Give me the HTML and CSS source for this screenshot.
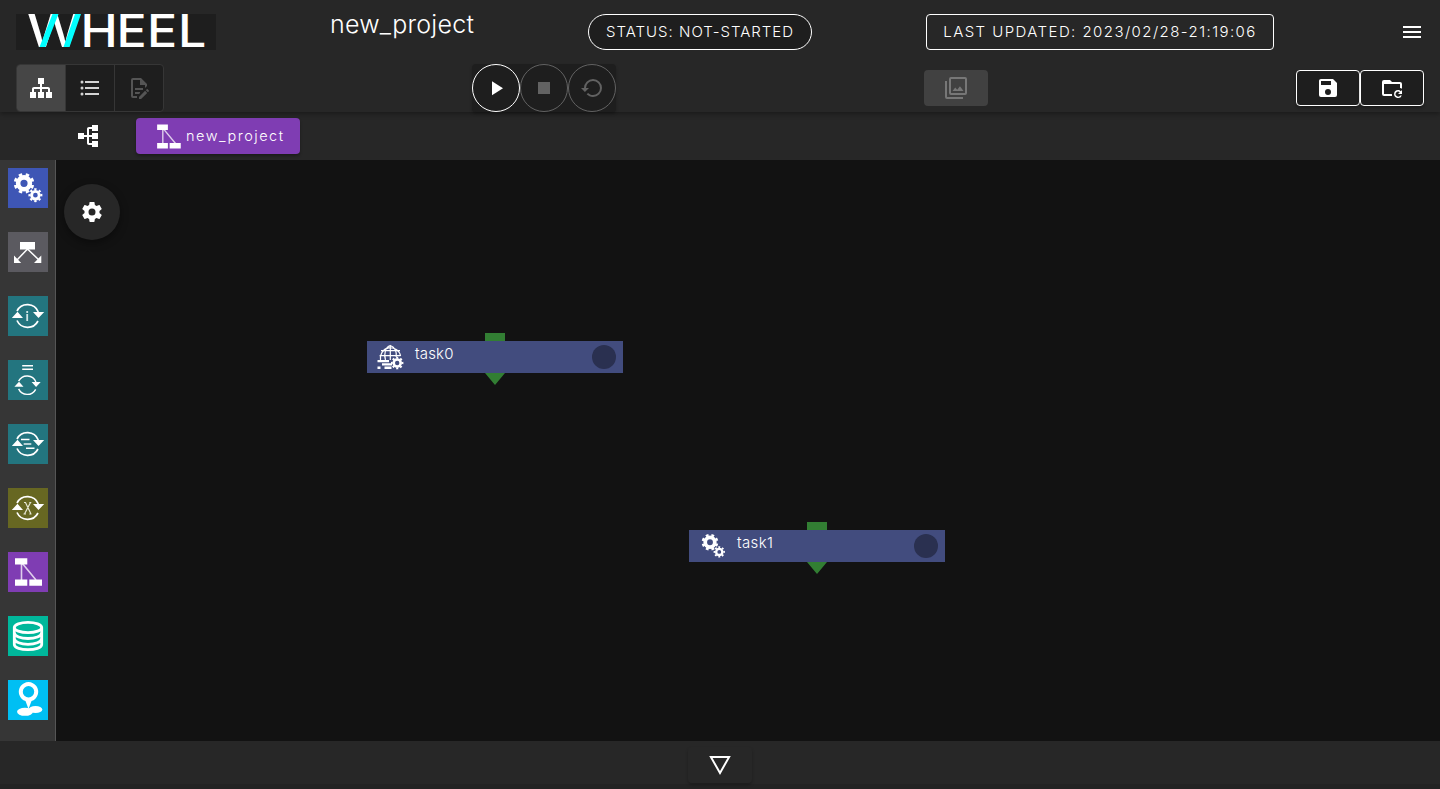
FILE: index.html
```html
<!DOCTYPE html>
<html lang="en">
<head>
<meta charset="utf-8">
<title>WHEEL workflow</title>
<link rel="stylesheet" href="styles.css">
</head>
<body>
<svg class="defs" width="0" height="0">
  <defs>
    <symbol id="gears" viewBox="0 0 40 40">
      <g fill="none" stroke="#fff">
        <circle cx="16" cy="15.3" r="5.9" stroke-width="4.6"/>
        <circle cx="16" cy="15.3" r="8.7" stroke-width="3.2" pathLength="16" stroke-dasharray="1 1" transform="rotate(11 16 15.3)"/>
        <circle cx="27.4" cy="27.2" r="3.8" stroke-width="2.9"/>
        <circle cx="27.4" cy="27.2" r="5.9" stroke-width="2.2" pathLength="16" stroke-dasharray="1 1" transform="rotate(-11 27.4 27.2)"/>
      </g>
    </symbol>
    <symbol id="cycle" viewBox="0 0 40 40">
      <path d="M9 15A11.7 11.7 0 0 1 30.3 16M30 25A11.7 11.7 0 0 1 9 24.5" fill="none" stroke="#fff" stroke-width="1.7"/>
      <path d="M3.8 21.9L9.5 15.8L15 21.9ZM25 16.1H36.2L30.5 22Z" fill="#fff"/>
    </symbol>
    <symbol id="flow" viewBox="0 0 40 40">
      <path d="M13.5 11V28M14 11L28 28" fill="none" stroke="#fff" stroke-opacity=".75" stroke-width="1.6"/>
      <path d="M7 6.3H19.3V12.5H7ZM7 27.5H19.3V33.7H7ZM21.3 27.5H34V33.7H21.3Z" fill="#fff"/>
    </symbol>
    <symbol id="sitemap" viewBox="0 0 24 24">
      <path fill="#fff" d="M9,2V8H11V11H5C3.89,11 3,11.89 3,13V16H1V22H7V16H5V13H11V16H9V22H15V16H13V13H19V16H17V22H23V16H21V13C21,11.89 20.11,11 19,11H13V8H15V2H9Z"/>
    </symbol>
  </defs>
</svg>
<div class="app">
  <header class="header">
    <div class="row-top">
      <svg class="logo" viewBox="0 0 200 36">
        <text x="11" y="33" textLength="54" lengthAdjust="spacingAndGlyphs" class="logo-text">W</text>
        <path d="M23.5 33H29.5L42.5 0H36.5ZM47.5 33H53.5L65 0H59Z" fill="#0ff"/>
        <text x="64.5 100.5 131 162" y="33" textLength="126" lengthAdjust="spacingAndGlyphs" class="logo-text">HEEL</text>
      </svg>
      <div class="title">new_project</div>
      <div class="chip status"><span>STATUS: NOT-STARTED</span></div>
      <div class="chip updated"><span>LAST UPDATED: 2023/02/28-21:19:06</span></div>
      <button class="menu"><svg class="icon" viewBox="0 0 24 24"><path d="M3,6H21V8H3V6M3,11H21V13H3V11M3,16H21V18H3V16Z"/></svg></button>
    </div>
    <div class="row-tools">
      <div class="views">
        <button class="view active"><svg class="icon"><use href="#sitemap"/></svg></button>
        <button class="view"><svg class="icon soft" viewBox="0 0 24 24"><path d="M7,5H21V7H7V5M7,13V11H21V13H7M4,4.5A1.5,1.5 0 0,1 5.5,6A1.5,1.5 0 0,1 4,7.5A1.5,1.5 0 0,1 2.5,6A1.5,1.5 0 0,1 4,4.5M4,10.5A1.5,1.5 0 0,1 5.5,12A1.5,1.5 0 0,1 4,13.5A1.5,1.5 0 0,1 2.5,12A1.5,1.5 0 0,1 4,10.5M7,19V17H21V19H7M4,16.5A1.5,1.5 0 0,1 5.5,18A1.5,1.5 0 0,1 4,19.5A1.5,1.5 0 0,1 2.5,18A1.5,1.5 0 0,1 4,16.5Z"/></svg></button>
        <button class="view"><svg class="icon dim" viewBox="0 0 24 24"><path d="M8,12H16V14H8V12M10,20H6V4H13V9H18V12.1L20,10.1V8L14,2H6A2,2 0 0,0 4,4V20A2,2 0 0,0 6,22H10V20M8,18H12.1L13,17.1V16H8V18M20.2,13C20.3,13 20.5,13.1 20.6,13.2L21.9,14.5C22.1,14.7 22.1,15.1 21.9,15.3L20.9,16.3L18.8,14.2L19.8,13.2C19.9,13.1 20,13 20.2,13M20.2,16.9L14.1,23H12V20.9L18.1,14.8L20.2,16.9Z"/></svg></button>
      </div>
      <div class="controls">
        <button class="round on"><svg class="icon" viewBox="0 0 24 24"><path d="M8,5.14V19.14L19,12.14L8,5.14Z"/></svg></button>
        <button class="round"><svg class="icon dim" viewBox="0 0 24 24"><path d="M18,18H6V6H18V18Z"/></svg></button>
        <button class="round"><svg class="icon dim" viewBox="0 0 24 24"><path d="M13,3A9,9 0 0,0 4,12H1L4.89,15.89L4.96,16.03L9,12H6A7,7 0 0,1 13,5A7,7 0 0,1 20,12A7,7 0 0,1 13,19C11.07,19 9.32,18.21 8.06,16.94L6.64,18.36C8.27,20 10.5,21 13,21A9,9 0 0,0 22,12A9,9 0 0,0 13,3Z"/></svg></button>
      </div>
      <button class="viewer"><svg class="icon" viewBox="0 0 24 24"><path d="M21,17H7V3H21M21,1H7A2,2 0 0,0 5,3V17A2,2 0 0,0 7,19H21A2,2 0 0,0 23,17V3A2,2 0 0,0 21,1M3,5H1V21A2,2 0 0,0 3,23H19V21H3M15.96,10.29L13.21,13.83L11.25,11.47L8.5,15H19.5L15.96,10.29Z"/></svg></button>
      <div class="files">
        <button class="file"><svg class="icon" viewBox="0 0 24 24"><path d="M15,9H5V5H15M12,19A3,3 0 0,1 9,16A3,3 0 0,1 12,13A3,3 0 0,1 15,16A3,3 0 0,1 12,19M17,3H5C3.89,3 3,3.9 3,5V19A2,2 0 0,0 5,21H19A2,2 0 0,0 21,19V7L17,3Z"/></svg></button>
        <button class="file"><svg class="icon" viewBox="0 0 24 24"><path d="M4 18V8H20V12C20.7 12.1 21.4 12.4 22 12.8V8A2 2 0 0 0 20 6H12L10 4H4A2 2 0 0 0 2 6V18A2 2 0 0 0 4 20H12.1A6 6 0 0 1 12 18Z"/><path d="M18 14C19.1 14 20.1 14.5 20.8 15.2L22 14V18H18L19.8 16.2A2.5 2.5 0 1 0 20.2 19.5H21.8A4 4 0 1 1 18 14Z"/></svg></button>
      </div>
    </div>
  </header>
  <nav class="crumbs">
    <button class="tree"><svg class="icon turned"><use href="#sitemap"/></svg></button>
    <button class="crumb"><svg class="crumb-icon" viewBox="0 0 40 40"><use href="#flow" width="40" height="40"/></svg><span>new_project</span></button>
  </nav>
  <main class="main">
    <aside class="palette">
      <svg class="tile task" viewBox="0 0 40 40"><use href="#gears"/></svg>
      <svg class="tile if" viewBox="0 0 40 40"><path d="M19.5 17L9 28M19.5 17L31 28" stroke="#fff" stroke-width="1.5"/><path d="M12 10H27V17.5H12ZM6 23.5L13.2 31H6ZM33.3 23.5V31H26Z" fill="#fff"/></svg>
      <svg class="tile loop" viewBox="0 0 40 40"><use href="#cycle"/><path d="M18.3 15h1.8v2h-1.8zM18.3 18h1.8v7h-1.8z" fill="#cfe3e5"/></svg>
      <svg class="tile loop" viewBox="0 0 40 40"><path d="M14.2 5.7H25M14.2 9.3H25" stroke="#fff" stroke-width="1.4"/><svg x="3.3" y="9" width="32.5" height="32.5" viewBox="0 0 40 40"><use href="#cycle"/></svg></svg>
      <svg class="tile loop" viewBox="0 0 40 40"><use href="#cycle"/><path d="M13 15.5H21.5M18 24.3H26.5" stroke="#fff" stroke-width="1.5"/><path d="M15.7 20H23.3" stroke="#b5d0d4" stroke-width="2"/></svg>
      <svg class="tile sweep" viewBox="0 0 40 40"><use href="#cycle"/><path d="M16 14.5h1.5L23 26M22.5 14.5L16.5 26M15.5 26h2.5M21.3 26h2.2M21.3 14.5h2" fill="none" stroke="#e6e6d2" stroke-width="1.2"/></svg>
      <svg class="tile workflow" viewBox="0 0 40 40"><use href="#flow"/></svg>
      <svg class="tile storage" viewBox="0 0 40 40"><g fill="none" stroke="#fff" stroke-width="2.8"><ellipse cx="20" cy="11.5" rx="13.7" ry="5.2"/><path d="M6.3 11.5V28.5C6.3 35.4 33.7 35.4 33.7 28.5V11.5M6.3 16.5C6.3 24.5 33.7 24.5 33.7 16.5M6.3 22.3C6.3 30.3 33.7 30.3 33.7 22.3"/></g></svg>
      <svg class="tile source" viewBox="0 0 40 40"><ellipse cx="17" cy="31.8" rx="8" ry="4" fill="#fff"/><ellipse cx="27.5" cy="29.5" rx="6.8" ry="3.6" fill="#fff"/><path d="M20.5 29L17.5 21A9.7 9.7 0 1 1 23.5 21Z" fill="#fff"/><circle cx="20.5" cy="11.7" r="5.7" fill="#00bff3"/></svg>
    </aside>
    <section class="canvas">
      <button class="settings"><svg class="icon" viewBox="0 0 24 24"><path d="M12,15.5A3.5,3.5 0 0,1 8.5,12A3.5,3.5 0 0,1 12,8.5A3.5,3.5 0 0,1 15.5,12A3.5,3.5 0 0,1 12,15.5M19.43,12.97C19.47,12.65 19.5,12.33 19.5,12C19.5,11.67 19.47,11.34 19.43,11L21.54,9.37C21.73,9.22 21.78,8.95 21.66,8.73L19.66,5.27C19.54,5.05 19.27,4.96 19.05,5.05L16.56,6.05C16.04,5.66 15.5,5.32 14.87,5.07L14.5,2.42C14.46,2.18 14.25,2 14,2H10C9.75,2 9.54,2.18 9.5,2.42L9.13,5.07C8.5,5.32 7.96,5.66 7.44,6.05L4.95,5.05C4.73,4.96 4.46,5.05 4.34,5.27L2.34,8.73C2.21,8.95 2.27,9.22 2.46,9.37L4.57,11C4.53,11.34 4.5,11.67 4.5,12C4.5,12.33 4.53,12.65 4.57,12.97L2.46,14.63C2.27,14.78 2.21,15.05 2.34,15.27L4.34,18.73C4.46,18.95 4.73,19.03 4.95,18.95L7.44,17.94C7.96,18.34 8.5,18.68 9.13,18.93L9.5,21.58C9.54,21.82 9.75,22 10,22H14C14.25,22 14.46,21.82 14.5,21.58L14.87,18.93C15.5,18.67 16.04,18.34 16.56,17.94L19.05,18.95C19.27,19.03 19.54,18.95 19.66,18.73L21.66,15.27C21.78,15.05 21.73,14.78 21.54,14.63L19.43,12.97Z"/></svg></button>
      <svg class="graph" viewBox="56 160 1384 581">
        <g transform="translate(367 341)">
          <path d="M118-8H138V0H118ZM118 32H138L128 44Z" fill="#327e33"/>
          <path d="M0 0H256V32H0Z" fill="#424c7e"/>
          <g fill="none" stroke="#fff" stroke-width="1.2">
            <path d="M13.5 19A10.2 10.2 0 1 1 33.6 15M23.3 4.5V19M14 9.7H33M12.6 14.7H33.5M18.5 19C16.5 13 18.5 6 23.3 4.5C28 6 30 11 29.2 16"/>
          </g>
          <path d="M10.5 19H22V21.3H10.5ZM15 22.3H25V24.6H15ZM10.5 25.5H13.5V28H10.5ZM17.5 25.5H24.5V28H17.5Z" fill="#fff"/>
          <circle cx="30.2" cy="22" r="3.5" fill="none" stroke="#fff" stroke-width="2.6"/>
          <circle cx="30.2" cy="22" r="5.3" fill="none" stroke="#fff" stroke-width="1.9" pathLength="16" stroke-dasharray="1 1" transform="rotate(-11 30.2 22)"/>
          <text x="48" y="18" textLength="38.5" class="label">task0</text>
          <circle cx="237" cy="16" r="12" fill="#2a3050"/>
        </g>
        <g transform="translate(689 530)">
          <path d="M118-8H138V0H118ZM118 32H138L128 44Z" fill="#327e33"/>
          <path d="M0 0H256V32H0Z" fill="#424c7e"/>
          <use href="#gears" x="8" y="-.2" width="32.5" height="32.5"/>
          <text x="48" y="18" textLength="36" class="label">task1</text>
          <circle cx="237" cy="16" r="12" fill="#2a3050"/>
        </g>
      </svg>
    </section>
  </main>
  <footer class="footer">
    <button class="drawer"><svg class="drawer-icon" viewBox="0 0 24 24"><path d="M1.2 3H22.8L12 22ZM4.6 5L12 18L19.4 5Z" fill-rule="evenodd"/></svg></button>
  </footer>
</div>
</body>
</html>
```
FILE: styles.css
```css
* { box-sizing: border-box; }
body {
  margin: 0;
  background: #121212;
  color: #fff;
  font-family: Inter, "Noto Sans CJK JP", sans-serif;
  font-weight: 300;
  overflow: hidden;
}
button { font: inherit; color: inherit; background: none; border: 0; margin: 0; padding: 0; display: flex; align-items: center; justify-content: center; }
.defs { position: absolute; }
.app { height: 789px; display: flex; flex-direction: column; }
.icon { width: 24px; height: 24px; fill: #fff; display: block; }
.soft { fill: #d4d4d4; }
.dim { fill: #626262; }
.header { height: 112px; background: #272727; box-shadow: 0 2px 5px rgba(0, 0, 0, .35); position: relative; z-index: 2; }
.row-top { height: 64px; padding: 0 4px 0 16px; display: flex; align-items: center; justify-content: space-between; }
.logo { width: 200px; height: 36px; background: #1e1e1e; overflow: visible; }
.logo-text { font: 500 45px Inter, sans-serif; fill: #fff; }
.title { width: 144px; height: 48px; font-size: 25px; line-height: 32px; letter-spacing: .25px; white-space: nowrap; }
.chip { height: 36px; padding-bottom: 2px; border: 1px solid #fff; background: #1e1e1e; display: flex; align-items: center; justify-content: center; font-size: 15px; white-space: nowrap; }
.status { width: 224px; border-radius: 18px; letter-spacing: 1px; }
.updated { width: 348px; border-radius: 4px; letter-spacing: 1.43px; background: #272727; }
.menu { width: 48px; height: 48px; }
.row-tools { height: 48px; padding: 0 16px; display: flex; align-items: center; justify-content: space-between; }
.views { display: flex; width: 148px; height: 48px; border: 1px solid #363636; border-radius: 4px; background: #1e1e1e; overflow: hidden; }
.view { flex: 1; border-left: 1px solid #363636; }
.view:first-child { border-left: 0; }
.view.active { background: #464646; }
.view .dim { fill: #555; }
.controls { display: flex; background: #1e1e1e; border-radius: 4px; box-shadow: 0 2px 3px rgba(0, 0, 0, .25); }
.round { width: 48px; height: 48px; border: 1px solid #626262; border-radius: 50%; }
.round.on { border-color: #fff; }
.viewer { width: 64px; height: 36px; border-radius: 4px; background: #414141; }
.viewer .icon { fill: #777; }
.files { display: flex; }
.file { width: 64px; height: 36px; border: 1px solid #fff; border-radius: 4px; background: #1e1e1e; box-shadow: 0 2px 3px rgba(0, 0, 0, .3); }
.crumbs { height: 48px; background: #272727; display: flex; align-items: center; padding-left: 64px; }
.tree { width: 48px; height: 48px; margin-right: 24px; }
.turned { transform: rotate(-90deg); }
.crumb { width: 164px; height: 36px; padding: 0 12px 0 15px; border-radius: 4px; background: #7f3db3; justify-content: flex-start; font-size: 14.5px; letter-spacing: 1.5px; box-shadow: 0 2px 3px rgba(0, 0, 0, .3); }
.crumb span { padding-bottom: 2px; }
.crumb-icon { width: 35px; height: 35px; flex: none; }
.main { flex: 1; display: flex; min-height: 0; }
.palette { width: 56px; padding: 8px 7px 0 8px; background: #363636; border-right: 1px solid #555; display: flex; flex-direction: column; gap: 24px; }
.tile { width: 40px; height: 40px; flex: none; }
.task { background: #3e56b5; }
.if { background: #5b5a60; }
.loop { background: #23757f; }
.sweep { background: #676722; }
.workflow { background: #7f3db3; }
.storage { background: #00b79b; }
.source { background: #00bff3; }
.canvas { flex: 1; position: relative; background: #121212; }
.graph { display: block; width: 1384px; height: 581px; }
.label { font-size: 15px; fill: #fff; }
.settings { position: absolute; left: 8px; top: 24px; width: 56px; height: 56px; border-radius: 50%; background: #272727; box-shadow: 0 3px 8px rgba(0, 0, 0, .4); }
.footer { height: 48px; background: #272727; border-bottom: 5px solid #232323; display: flex; justify-content: center; padding-top: 6px; }
.drawer { width: 64px; height: 36px; border-radius: 4px; box-shadow: 0 2px 3px rgba(0, 0, 0, .25); }
.drawer-icon { width: 24px; height: 24px; fill: #fff; }
```
